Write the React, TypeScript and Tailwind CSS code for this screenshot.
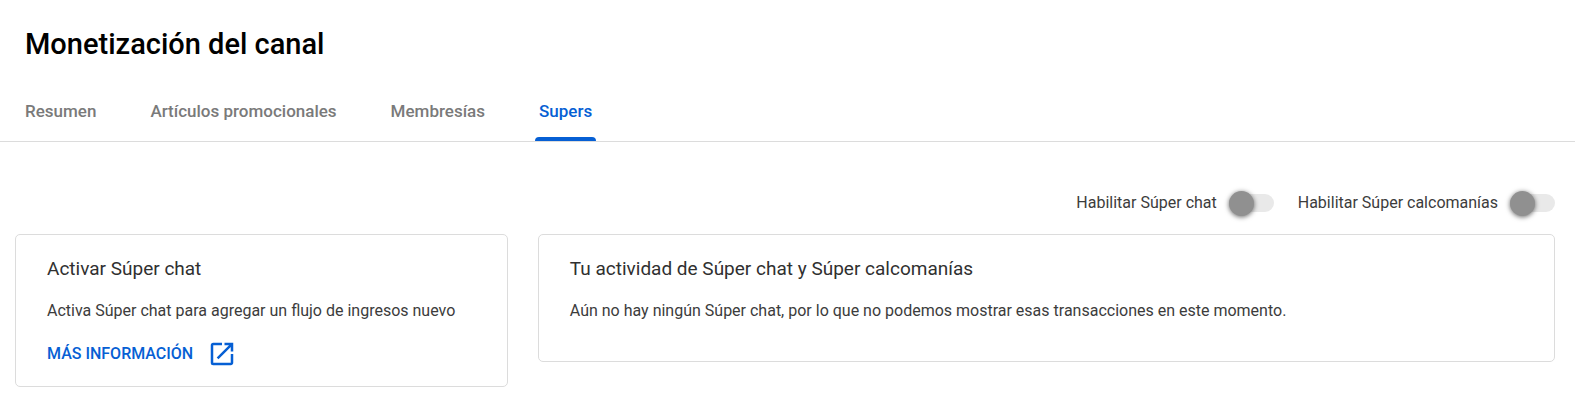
import { useState } from 'react';
import { MdOpenInNew } from 'react-icons/md';

const tabs = ['Resumen', 'Artículos promocionales', 'Membresías', 'Supers'];

interface ToggleProps {
  id: string;
  label: string;
}

function Toggle({ id, label }: ToggleProps) {
  const [enabled, setEnabled] = useState(false);

  return (
    <div className="flex items-center gap-3">
      <label htmlFor={id} className="text-base leading-6">{label}</label>
      <input
        id={id}
        type="checkbox"
        checked={enabled}
        onChange={() => setEnabled(!enabled)}
        className="flex h-[18px] w-[45px] appearance-none items-center rounded-full bg-[#e9e9e9] before:size-[25px] before:shrink-0 before:rounded-full before:bg-[#909090] before:shadow-[0_1px_5px_rgba(0,0,0,0.6)] before:content-[''] checked:justify-end checked:bg-[#9bbfee] checked:before:bg-[#065fd4]"
      />
    </div>
  );
}

export default function App() {
  const [activeTab, setActiveTab] = useState('Supers');

  return (
    <div className="min-h-screen bg-white font-[Roboto,sans-serif] text-[#3c3c3c]">
      <header className="border-b border-[#dcdcdc]">
        <h1 className="px-[25px] pt-[26px] text-[29px] leading-9 font-medium text-black">Monetización del canal</h1>
        <div role="tablist" className="mt-[19px] flex gap-[46px] px-[21px]">
          {tabs.map((tab) => (
            <button
              key={tab}
              role="tab"
              aria-selected={activeTab === tab}
              onClick={() => setActiveTab(tab)}
              className={`relative h-[60px] px-1 text-[17px] leading-6 font-medium ${activeTab === tab ? 'text-[#065fd4]' : 'text-[#7a7a7a]'}`}
            >
              {tab}
              {activeTab === tab && <span className="absolute inset-x-0 bottom-0 h-1 rounded-t bg-[#065fd4]" />}
            </button>
          ))}
        </div>
      </header>

      <main className="pr-5 pl-[15px]">
        <div className="flex justify-end gap-6 pt-[49px] pb-[19px]">
          <Toggle id="super-chat" label="Habilitar Súper chat" />
          <Toggle id="super-stickers" label="Habilitar Súper calcomanías" />
        </div>

        <div className="flex items-start gap-[30px]">
          <section className="w-[32%] rounded-[5px] border border-[#dcdcdc] px-[31px] pt-5 pb-[17px]">
            <h2 className="text-[19px] leading-7 text-[#303030]">Activar Súper chat</h2>
            <p className="mt-4 text-base leading-6">Activa Súper chat para agregar un flujo de ingresos nuevo</p>
            <a href="#" className="mt-4 inline-flex items-center gap-[14px] text-base leading-6 font-medium text-[#065fd4] uppercase">
              Más información
              <MdOpenInNew className="size-[30px]" />
            </a>
          </section>

          <section className="flex-1 rounded-[5px] border border-[#dcdcdc] px-[31px] pt-5 pb-[38px]">
            <h2 className="text-[19px] leading-7 text-[#303030]">Tu actividad de Súper chat y Súper calcomanías</h2>
            <p className="mt-4 text-base leading-6">
              Aún no hay ningún Súper chat, por lo que no podemos mostrar esas transacciones en este momento.
            </p>
          </section>
        </div>
      </main>
    </div>
  );
}
